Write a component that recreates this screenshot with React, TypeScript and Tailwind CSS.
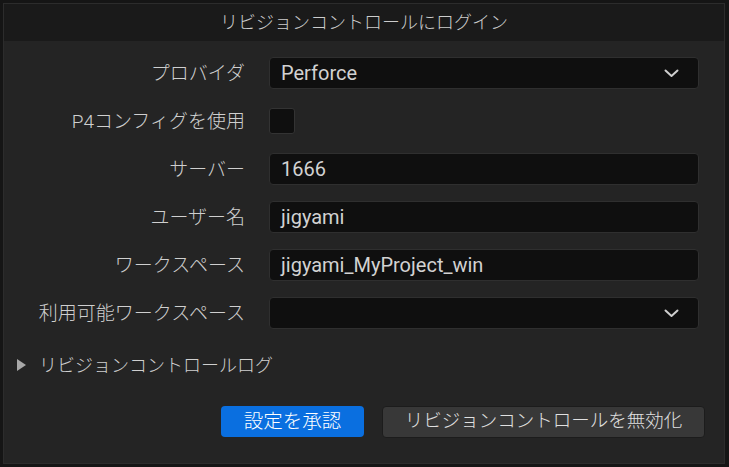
import React from 'react';

const font = { fontFamily: 'Roboto, "Noto Sans CJK JP", sans-serif' };

const Chevron: React.FC = () => (
  <svg width="15" height="9" viewBox="0 0 15 9" fill="none" className="text-[#cfcfcf]">
    <path d="M1.5 1.5 L7.5 7 L13.5 1.5" stroke="currentColor" strokeWidth="2" strokeLinecap="round" strokeLinejoin="round" />
  </svg>
);

const Row: React.FC<{ label: string; children: React.ReactNode }> = ({ label, children }) => (
  <div className="flex items-center h-[32px]">
    <div className="w-[241px] text-right text-[19px] leading-none font-light text-[#cfcfcf]">{label}</div>
    <div className="ml-[24px] w-[430px] h-full flex items-center">{children}</div>
  </div>
);

const TextBox: React.FC<{ value: string }> = ({ value }) => (
  <div className="w-full h-full flex items-center px-[11px] bg-[#0f0f0f] border border-[#2f2f2f] rounded-[4px] text-[20px] text-[#d2d2d2]">
    {value}
  </div>
);

const ComboBox: React.FC<{ value: string }> = ({ value }) => (
  <div className="w-full h-full flex items-center justify-between pl-[11px] pr-[19px] bg-[#0f0f0f] border border-[#2f2f2f] rounded-[4px] text-[20px] text-[#d2d2d2]">
    <span>{value}</span>
    <Chevron />
  </div>
);

const App: React.FC = () => {
  return (
    <div className="w-[729px] h-[467px] bg-[#151515] pt-[3px] pl-[3px] pr-[4px] pb-[3px]" style={font}>
      <div className="h-full flex flex-col border border-[#2c2c2c] bg-[#242424]">
        {/* Title bar */}
        <div className="h-[37px] flex items-center justify-center bg-[#1a1a1a] text-[18px] font-light text-[#cccccc]">
          リビジョンコントロールにログイン
        </div>

        {/* Form */}
        <div className="flex flex-col gap-[16px] pt-[16px]">
          <Row label="プロバイダ">
            <ComboBox value="Perforce" />
          </Row>
          <Row label="P4コンフィグを使用">
            <div className="w-[26px] h-[26px] bg-[#0f0f0f] border border-[#333] rounded-[3px]" />
          </Row>
          <Row label="サーバー">
            <TextBox value="1666" />
          </Row>
          <Row label="ユーザー名">
            <TextBox value="jigyami" />
          </Row>
          <Row label="ワークスペース">
            <TextBox value="jigyami_MyProject_win" />
          </Row>
          <Row label="利用可能ワークスペース">
            <ComboBox value="" />
          </Row>
        </div>

        {/* Log expander */}
        <div className="mt-[24px] h-[24px] flex items-center pl-[13px] text-[18px] font-light text-[#cfcfcf]">
          <svg width="9" height="12" viewBox="0 0 9 12" className="mr-[13px]">
            <path d="M0 0 L9 6 L0 12 Z" fill="#a8a8a8" />
          </svg>
          リビジョンコントロールログ
        </div>

        {/* Buttons */}
        <div className="mt-[29px] flex justify-end gap-[18px] pr-[19px]">
          <button className="w-[143px] h-[31px] flex items-center justify-center bg-[#0a6fe0] rounded-[4px] text-[19.5px] font-light text-white">
            設定を承認
          </button>
          <button className="w-[323px] h-[32px] flex items-center justify-center bg-[#383838] border border-[#1c1c1c] rounded-[4px] text-[18.5px] font-light text-[#e0e0e0]">
            リビジョンコントロールを無効化
          </button>
        </div>
      </div>
    </div>
  );
};

export default App;
